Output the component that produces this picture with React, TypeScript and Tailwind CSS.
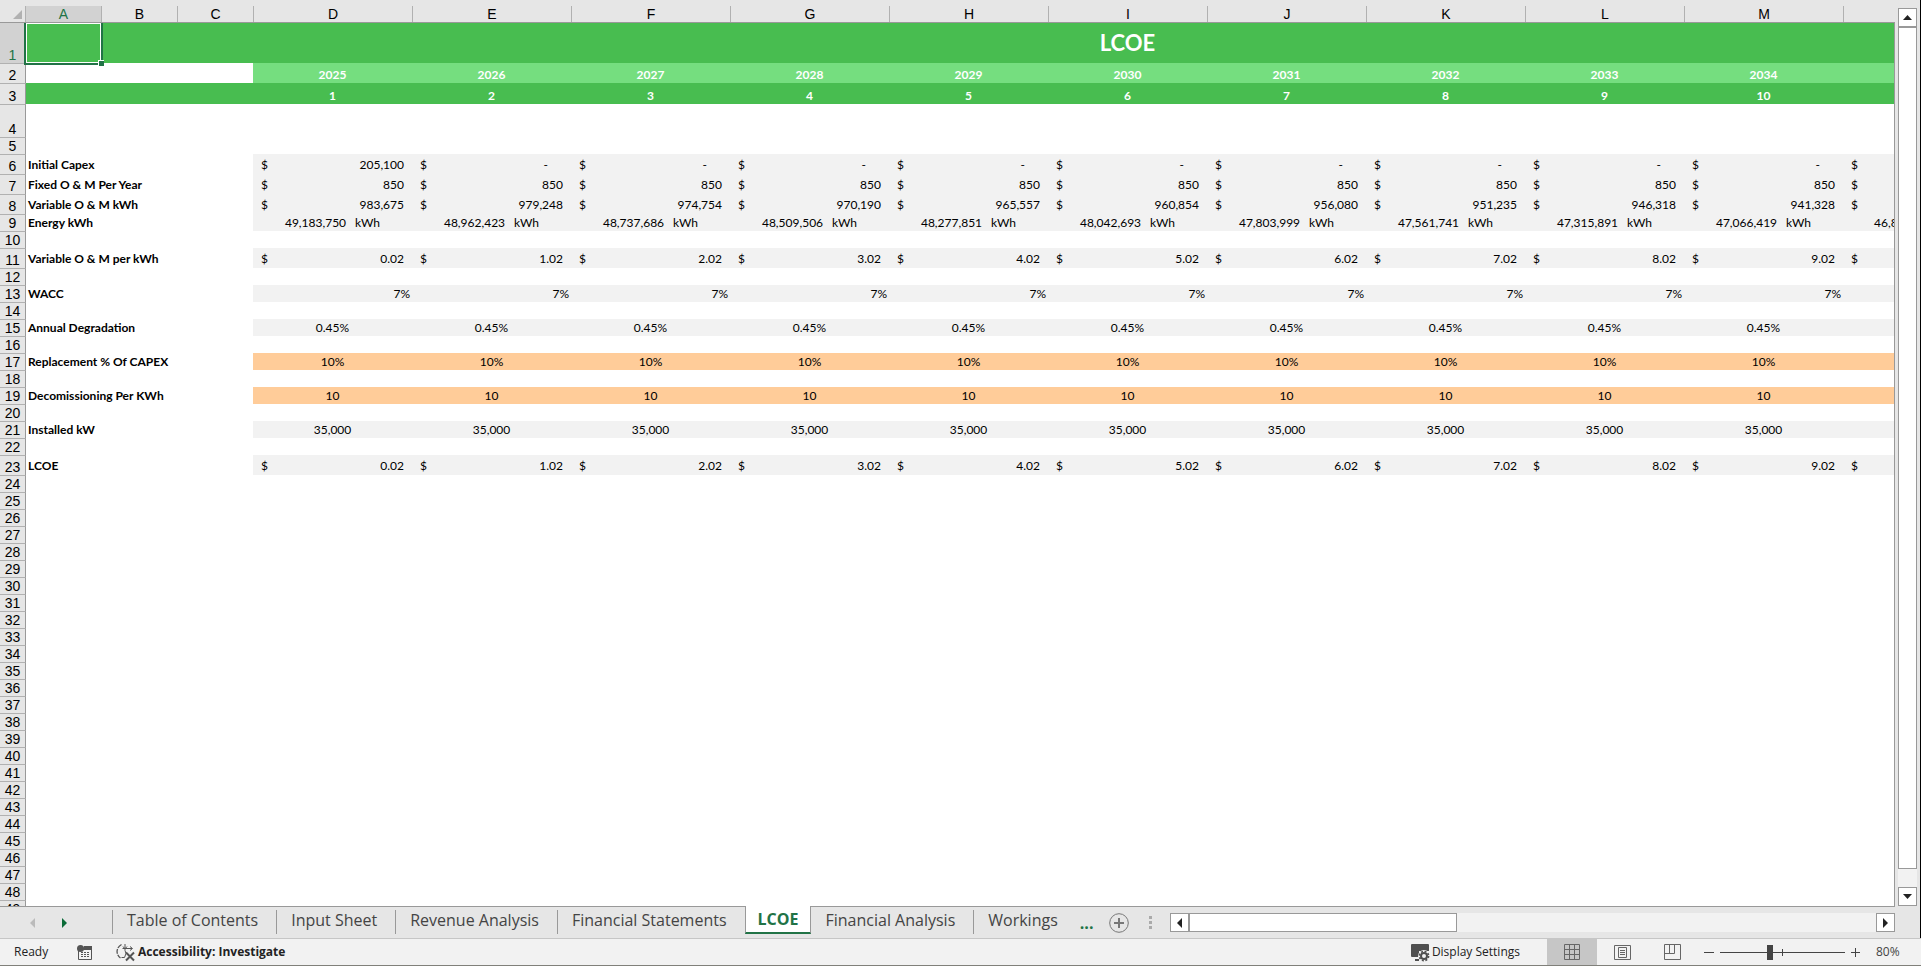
import React, { useState } from 'react';
import clsx from 'clsx';

type RowKind = 'blank' | 'currency' | 'energy' | 'right' | 'center';

interface SheetRow {
    label?: string;
    kind: RowKind;
    height: string;
    fill?: string;
    values?: string[];
}

const COLUMNS = ['A', 'B', 'C', 'D', 'E', 'F', 'G', 'H', 'I', 'J', 'K', 'L', 'M'];
const YEARS = Array.from({ length: 10 }, (_, i) => 2025 + i);

const same = (value: string) => YEARS.map(() => value);
const unitCost = YEARS.map((_, i) => `${i}.02`);

const GRAY = 'bg-[#f2f2f2]';
const ORANGE = 'bg-[#ffcc99]';
const blank: SheetRow = { kind: 'blank', height: 'h-[17px]' };

// Sheet rows 5 to 49
const BODY_ROWS: SheetRow[] = [
    blank,
    { label: 'Initial Capex', kind: 'currency', height: 'h-5', fill: GRAY, values: YEARS.map((_, i) => (i === 0 ? '205,100' : '-')) },
    { label: 'Fixed O & M Per Year', kind: 'currency', height: 'h-5', fill: GRAY, values: same('850') },
    { label: 'Variable O & M kWh', kind: 'currency', height: 'h-5', fill: GRAY, values: ['983,675', '979,248', '974,754', '970,190', '965,557', '960,854', '956,080', '951,235', '946,318', '941,328'] },
    { label: 'Energy kWh', kind: 'energy', height: 'h-[17px]', fill: GRAY, values: ['49,183,750', '48,962,423', '48,737,686', '48,509,506', '48,277,851', '48,042,693', '47,803,999', '47,561,741', '47,315,891', '47,066,419'] },
    blank,
    { label: 'Variable O & M per kWh', kind: 'currency', height: 'h-5', fill: GRAY, values: unitCost },
    blank,
    { label: 'WACC', kind: 'right', height: 'h-[17px]', fill: GRAY, values: same('7%') },
    blank,
    { label: 'Annual Degradation', kind: 'center', height: 'h-[17px]', fill: GRAY, values: same('0.45%') },
    blank,
    { label: 'Replacement % Of CAPEX', kind: 'center', height: 'h-[17px]', fill: ORANGE, values: same('10%') },
    blank,
    { label: 'Decomissioning Per KWh', kind: 'center', height: 'h-[17px]', fill: ORANGE, values: same('10') },
    blank,
    { label: 'Installed kW', kind: 'center', height: 'h-[17px]', fill: GRAY, values: same('35,000') },
    blank,
    { label: 'LCOE', kind: 'currency', height: 'h-5', fill: GRAY, values: unitCost },
    ...Array.from({ length: 26 }, () => blank),
];

const TABS = ['Table of Contents', 'Input Sheet', 'Revenue Analysis', 'Financial Statements', 'LCOE', 'Financial Analysis', 'Workings'];

const RowHeader: React.FC<{ n: number; active?: boolean }> = ({ n, active }) => (
    <th
        scope="row"
        className={clsx(
            "border-r border-r-[#999] p-0 text-center align-bottom font-['Liberation_Sans',Arial,sans-serif] text-[14px] leading-4 font-normal",
            active ? 'bg-[#d2d2d2] text-[#217346]' : 'border-t border-t-[#b1b1b1] bg-[#e6e6e6] text-black',
        )}
    >
        {n}
    </th>
);

const ValueCell: React.FC<{ row: SheetRow; value: string }> = ({ row, value }) => {
    if (row.kind === 'currency') {
        return (
            <td className={clsx('p-0 pr-2 pl-2 align-bottom leading-[18px]', row.fill)}>
                <div className="flex justify-between">
                    <span>$</span>
                    <span className={value === '-' ? 'pr-[15px]' : undefined}>{value}</span>
                </div>
            </td>
        );
    }
    if (row.kind === 'energy') {
        return (
            <td className={clsx('p-0 pr-8 text-right align-bottom', row.fill)}>
                {value}
                <span className="pl-[9px]">kWh</span>
            </td>
        );
    }
    return <td className={clsx('p-0 align-bottom', row.kind === 'right' ? 'pr-0.5 text-right' : 'text-center', row.fill)}>{value}</td>;
};

// Column N is only partly scrolled into view
const EdgeCell: React.FC<{ row: SheetRow }> = ({ row }) => (
    <td className={clsx('p-0 align-bottom', row.kind === 'currency' ? 'pl-2 leading-[18px]' : 'pl-[31px]', row.fill)}>
        {row.kind === 'currency' && '$'}
        {row.kind === 'energy' && '46,8'}
    </td>
);

const Sheet: React.FC = () => (
    <table className="w-[2002px] table-fixed border-separate border-spacing-0 font-[Lato,Calibri,sans-serif] text-[12px] leading-4 whitespace-nowrap text-black">
        <colgroup>
            <col className="w-[26px]" />
            <col className="w-[75px]" />
            <col className="w-[76px]" />
            <col className="w-[76px]" />
            {YEARS.map(y => <col key={y} className="w-[159px]" />)}
            <col className="w-[159px]" />
        </colgroup>
        <tbody>
            <tr className="h-[40px]">
                <RowHeader n={1} active />
                <td className="relative bg-[#48bd50] p-0">
                    <div className="absolute -top-0.5 -right-0.5 -bottom-0.5 -left-0.5 border-2 border-[#217346]">
                        <div className="h-full border border-white" />
                        <span className="absolute -right-[3px] -bottom-[3px] size-[6px] border-t border-l border-white bg-[#217346]" />
                    </div>
                </td>
                <td colSpan={2} className="bg-[#48bd50] p-0" />
                <td colSpan={11} className="bg-[#48bd50] p-0 text-center text-[22px] leading-8 font-bold text-white">LCOE</td>
            </tr>
            <tr className="h-5">
                <RowHeader n={2} />
                <td colSpan={3} className="p-0" />
                {YEARS.map(y => <td key={y} className="bg-[#75de7f] p-0 text-center align-bottom font-bold text-white">{y}</td>)}
                <td className="bg-[#75de7f] p-0" />
            </tr>
            <tr className="h-[21px]">
                <RowHeader n={3} />
                <td colSpan={3} className="bg-[#48bd50] p-0" />
                {YEARS.map((y, i) => <td key={y} className="bg-[#48bd50] p-0 text-center align-bottom font-bold text-white">{i + 1}</td>)}
                <td className="bg-[#48bd50] p-0" />
            </tr>
            <tr className="h-[33px]">
                <RowHeader n={4} />
                <td colSpan={14} className="p-0" />
            </tr>
            {BODY_ROWS.map((row, i) => (
                <tr key={i} className={row.height}>
                    <RowHeader n={i + 5} />
                    <td colSpan={3} className={clsx('p-0 pl-0.5 align-bottom font-bold', row.kind === 'currency' && 'leading-[18px]')}>{row.label}</td>
                    {row.values?.map((value, j) => <ValueCell key={j} row={row} value={value} />)}
                    {row.values && <EdgeCell row={row} />}
                </tr>
            ))}
        </tbody>
    </table>
);

const ColumnHeaders: React.FC = () => (
    <div className="flex h-[23px] shrink-0 items-end border-b border-[#999] bg-[#e6e6e6] font-['Liberation_Sans',Arial,sans-serif] text-[14px] leading-4">
        <div className="flex h-4 w-[25px] shrink-0 items-end justify-end pr-[3px] pb-[3px]">
            <svg className="size-[9px]" viewBox="0 0 9 9"><path d="M9 0v9H0z" fill="#b1b1b1" /></svg>
        </div>
        {COLUMNS.map((c, i) => (
            <div
                key={c}
                className={clsx(
                    'h-4 shrink-0 border-l border-[#b1b1b1] text-center',
                    i < 3 ? 'w-[76px]' : 'w-[159px]',
                    i === 0 && 'bg-[#d2d2d2] text-[#217346]',
                )}
            >
                {c}
            </div>
        ))}
        <div className="h-4 flex-1 border-l border-[#b1b1b1]" />
    </div>
);

const scrollButton = 'flex size-[19px] shrink-0 items-center justify-center border border-[#999] bg-white';

const VerticalScroll: React.FC = () => (
    <div className="flex w-[26px] shrink-0 flex-col items-center border-r border-black bg-[#e6e6e6] pt-2">
        <button aria-label="Scroll up" className={scrollButton}>
            <svg className="h-[5px] w-[9px]" viewBox="0 0 9 5"><path d="M0 5h9L4.5 0z" fill="#222" /></svg>
        </button>
        <div className="flex w-[19px] flex-1 flex-col bg-[#f2f2f2] pb-[18px]">
            <div className="flex-1 border border-[#999] bg-white" />
        </div>
        <button aria-label="Scroll down" className={scrollButton}>
            <svg className="h-[5px] w-[9px]" viewBox="0 0 9 5"><path d="M0 0h9L4.5 5z" fill="#222" /></svg>
        </button>
    </div>
);

const TabBar: React.FC = () => {
    const [active, setActive] = useState('LCOE');
    return (
        <div className="flex h-8 shrink-0 border-r border-r-black bg-[#e6e6e6] font-['Open_Sans','Segoe_UI',sans-serif]">
            <div className="flex w-28 shrink-0 items-center gap-[27px] border-t border-[#999] pl-[30px]">
                <button aria-label="Previous sheet"><svg className="h-[10px] w-[5px]" viewBox="0 0 5 10"><path d="M5 0v10L0 5z" fill="#bbb" /></svg></button>
                <button aria-label="Next sheet"><svg className="h-[10px] w-[5px]" viewBox="0 0 5 10"><path d="M0 0v10l5-5z" fill="#0b6b38" /></svg></button>
            </div>
            {TABS.map((tab, i) => {
                const isActive = tab === active;
                const divider = !isActive && TABS[i - 1] !== active;
                return (
                    <button
                        key={tab}
                        onClick={() => setActive(tab)}
                        className={clsx(
                            'flex shrink-0 items-start text-[16px] leading-[26px] whitespace-nowrap',
                            isActive ? 'mb-1 border-x border-b-2 border-x-[#999] border-b-[#217346] bg-white px-3 font-bold text-[#217346]' : 'border-t border-[#999] text-[#444]',
                        )}
                    >
                        {isActive ? tab : <span className={clsx('mt-[3px] h-6 pr-[18px] pl-[14px] leading-5', divider && 'border-l border-[#999]')}>{tab}</span>}
                    </button>
                );
            })}
            <div className="flex flex-1 items-center border-t border-[#999] pl-1">
                <button aria-label="More sheets" className="text-[16px] leading-5 font-bold text-[#217346]">...</button>
                <button aria-label="New sheet" className="ml-4">
                    <svg className="size-5" viewBox="0 0 20 20" fill="none" stroke="#777"><circle cx="10" cy="10" r="9.3" /><path d="M10 5v10M5 10h10" strokeWidth="2" /></svg>
                </button>
                <svg className="ml-5 h-[14px] w-[3px]" viewBox="0 0 3 14" fill="#aaa"><path d="M0 0h3v3H0zM0 5h3v3H0zM0 10h3v3H0z" /></svg>
                <div className="ml-[18px] flex flex-1 bg-[#f2f2f2]">
                    <button aria-label="Scroll left" className={scrollButton}>
                        <svg className="h-[10px] w-[5px]" viewBox="0 0 5 10"><path d="M5 0v10L0 5z" fill="#222" /></svg>
                    </button>
                    <div className="flex-1"><div className="h-[19px] w-[39%] border border-[#999] bg-white" /></div>
                    <button aria-label="Scroll right" className={scrollButton}>
                        <svg className="h-[10px] w-[5px]" viewBox="0 0 5 10"><path d="M0 0v10l5-5z" fill="#222" /></svg>
                    </button>
                </div>
            </div>
            <div className="w-[25px] shrink-0" />
        </div>
    );
};

const StatusBar: React.FC = () => (
    <div className="flex h-7 shrink-0 items-center border-t border-b border-t-[#c6c6c6] border-b-[#80807a] bg-[#f2f2f2] font-['Open_Sans','Segoe_UI',sans-serif] text-[12px] leading-4 text-[#222]">
        <span className="w-[77px] pl-[14px]">Ready</span>
        <button aria-label="Record macro">
            <svg className="h-[15px] w-4" viewBox="0 0 16 15" fill="none" stroke="#555">
                <path d="M1.5 6v8.5h13V1.5H7" />
                <path d="M7 1h8v4H6z" fill="#555" stroke="none" />
                <circle cx="3.5" cy="3.5" r="3.5" fill="#555" stroke="none" />
                <path d="M4 7.5h9M4 9.5h9M4 11.5h9" strokeDasharray="2 1" />
            </svg>
        </button>
        <button className="ml-[23px] flex items-center gap-[3px] font-bold">
            <svg className="size-[19px]" viewBox="0 0 19 19" fill="none" stroke="#555">
                <path d="M5.5 1.5C1 4 .5 8.500 1.500 11c.5 1.500 1.500 3 3 4" strokeWidth="1.300" strokeDasharray="5 1" />
                <path d="M5.500 14.500h3l1.500-4-1-3V1M6.500 5.500H16M14 3.500l2.500 2L14 7.500M7 3.500l2 2.500 2-2.500" />
                <path d="M10 9.500l8 8M18 9.500l-8 8" strokeWidth="2" />
            </svg>
            Accessibility: Investigate
        </button>
        <button className="ml-auto flex items-center gap-0.5">
            <svg className="size-[19px]" viewBox="0 0 19 19">
                <path d="M1 1h16a1 1 0 0 1 1 1v6H8v6H1a1 1 0 0 1-1-1V2a1 1 0 0 1 1-1zM4 16h4v2H4z" fill="#505050" />
                <circle cx="13" cy="13" r="6" fill="#f2f2f2" />
                <circle cx="13" cy="13" r="3" fill="none" stroke="#505050" strokeWidth="2" />
                <circle cx="13" cy="13" r="4.600" fill="none" stroke="#505050" strokeWidth="1.600" strokeDasharray="2 1.610" />
            </svg>
            Display Settings
        </button>
        <button aria-label="Normal view" className="ml-[27px] flex h-full w-[50px] items-center justify-center bg-[#c6c6c6]">
            <svg className="size-4" viewBox="0 0 16 16" fill="none" stroke="#666"><path d="M.5.5h15v15H.5zM5.500.5v15M10.500.5v15M.5 5.500h15M.5 10.500h15" /></svg>
        </button>
        <button aria-label="Page layout view" className="flex h-full w-[50px] items-center justify-center">
            <svg className="h-[15px] w-[17px]" viewBox="0 0 17 15" fill="none" stroke="#666"><path d="M.5.5h16v14H.5zM4.500 2.500h8v10h-8zM6 5.500h5M6 7.500h5M6 9.500h5" /></svg>
        </button>
        <button aria-label="Page break preview" className="flex h-full w-[50px] items-center justify-center">
            <svg className="h-4 w-[17px]" viewBox="0 0 17 16" fill="none" stroke="#666"><path d="M.5.5h16v15H.5zM.5 9.500h10v-9M5.500.5v9" /></svg>
        </button>
        <button aria-label="Zoom out" className="ml-[7px]"><svg className="h-[9px] w-[10px]" viewBox="0 0 10 9" stroke="#444"><path d="M0 4.500h10" /></svg></button>
        <svg className="ml-[6px] h-[15px] w-[125px]" viewBox="0 0 125 15" fill="#444"><path d="M0 7h125v1H0zM62 4h1v7h-1zM47 0h6v15h-6z" /></svg>
        <button aria-label="Zoom in" className="ml-[6px]"><svg className="size-[9px]" viewBox="0 0 9 9" stroke="#444"><path d="M0 4.500h9M4.500 0v9" /></svg></button>
        <span className="w-[61px] pl-4 text-[#444]">80%</span>
    </div>
);

const App: React.FC = () => (
    <div className="flex h-screen flex-col overflow-hidden bg-[#e6e6e6]">
        <div className="flex min-h-0 flex-1">
            <div className="flex min-w-0 flex-1 flex-col overflow-hidden">
                <ColumnHeaders />
                <div className="min-h-0 flex-1 overflow-hidden border-r border-[#999] bg-white">
                    <Sheet />
                </div>
            </div>
            <VerticalScroll />
        </div>
        <TabBar />
        <StatusBar />
    </div>
);

export default App;
